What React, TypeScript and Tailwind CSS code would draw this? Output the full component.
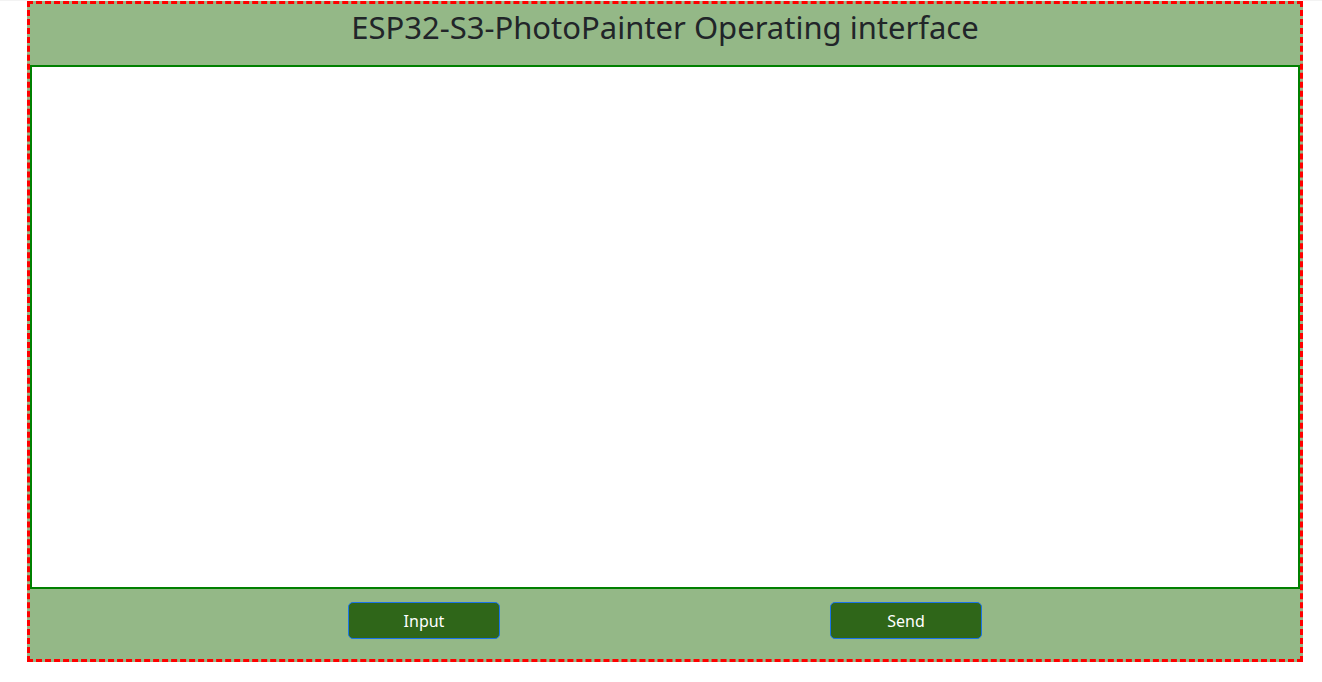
export default function App() {
  return (
    <div className="w-[1322px] h-[682px] bg-white" style={{ fontFamily: '"Noto Sans", "Open Sans", sans-serif' }}>
      <div className="h-px bg-[#f3f3f3]" />
      <div className="ml-[27px] w-[1276px] h-[661px] border-[3px] border-dashed border-[#ff0000] bg-[#94b887] flex flex-col">
        <div className="h-[61px] flex items-start justify-center">
          <h1 className="text-[31px] leading-[44px] text-[#212529] pt-px">ESP32-S3-PhotoPainter Operating interface</h1>
        </div>
        <div className="h-[524px] bg-white border-2 border-[#008000]" />
        <div className="flex-1 flex justify-center items-start gap-[330px] pt-[13px]">
          <button className="w-[152px] h-[37px] bg-[#2f6619] border border-[#1a73e8] rounded-[5px] text-white text-[16px]">Input</button>
          <button className="w-[152px] h-[37px] bg-[#2f6619] border border-[#1a73e8] rounded-[5px] text-white text-[16px]">Send</button>
        </div>
      </div>
    </div>
  );
}
